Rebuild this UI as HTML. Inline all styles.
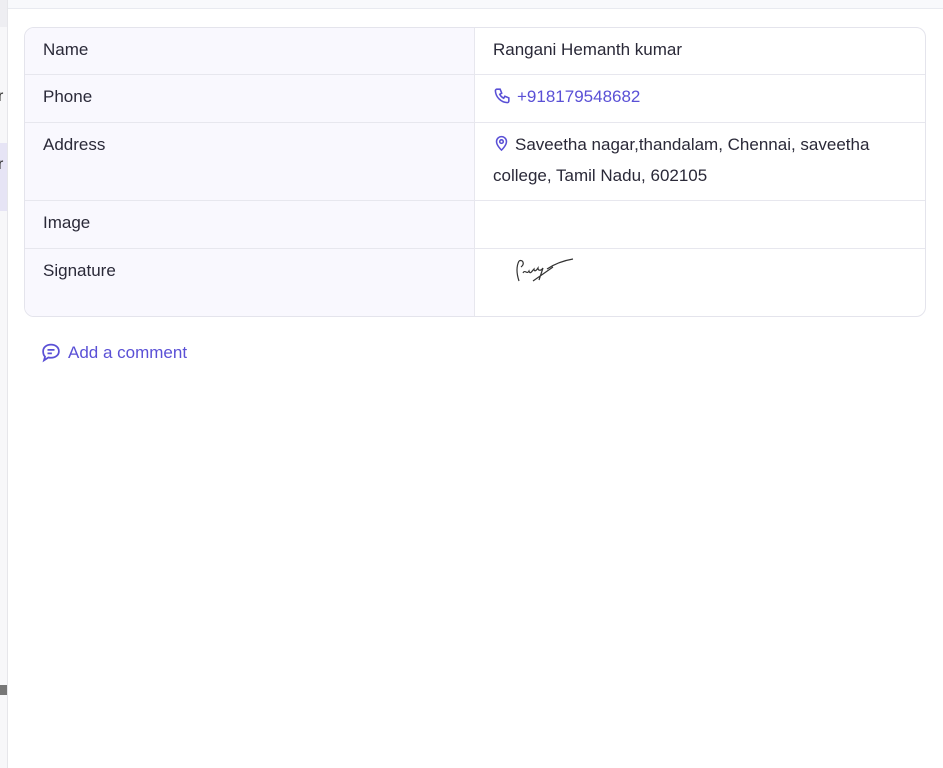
<!DOCTYPE html>
<html><head><meta charset="utf-8"><style>
body{margin:0;width:943px;height:768px;overflow:hidden;background:#fff;font-family:"Liberation Sans",sans-serif;position:relative}
.side{position:absolute;left:0;top:0;width:7px;height:768px;background:#f7f7f9;border-right:1px solid #e6e6ea;overflow:hidden}
.top{position:absolute;left:8px;top:0;right:0;height:8px;background:#f8f9fc;border-bottom:1px solid #e8eaf0}
.card{position:absolute;left:24px;top:27px;width:900px;height:288px;border:1px solid #e4e4ec;border-radius:10px;overflow:hidden}
.row{display:flex;border-bottom:1px solid #e7e7ee;box-sizing:border-box}
.row:last-child{border-bottom:none}
.k{width:450px;background:#f9f8fe;border-right:1px solid #e7e7ee;padding:12px 0 0 18px;box-sizing:border-box;font-size:17px;color:#2a2938}
.v{flex:1;padding:12px 0 0 18px;font-size:17px;color:#2a2938;line-height:31px;margin-top:-6px}
.lk{color:#5a50d6}
.c{position:absolute;left:40px;top:342px;color:#5a50d6;font-size:17px;display:flex;align-items:center;gap:6px}
</style></head><body>
<div class="side"><div style="position:absolute;top:0;height:27px;width:7px;background:#eeeef2"></div><div style="position:absolute;top:143px;height:68px;width:7px;background:#e6e4f5"></div><div style="position:absolute;top:88px;left:-2px;font-size:16px;color:#333">r</div><div style="position:absolute;top:156px;left:-2px;font-size:16px;color:#333">r</div><div style="position:absolute;top:685px;height:10px;width:7px;background:#777"></div></div>
<div class="top"></div>
<div class="card">
<div class="row" style="height:47px"><div class="k">Name</div><div class="v">Rangani Hemanth kumar</div></div>
<div class="row" style="height:48px"><div class="k">Phone</div><div class="v lk"><svg width="19" height="19" viewBox="0 0 24 24" fill="none" stroke="#5a50d6" stroke-width="2" style="vertical-align:-3px;margin-right:5px"><path d="M5 4h4l2 5-2.5 1.5a11 11 0 0 0 5 5L15 13l5 2v4a2 2 0 0 1-2 2A16 16 0 0 1 3 6a2 2 0 0 1 2-2"/></svg>+918179548682</div></div>
<div class="row" style="height:78px"><div class="k">Address</div><div class="v"><svg width="17" height="20" viewBox="0 0 24 24" fill="none" stroke="#5a50d6" stroke-width="2.2" style="vertical-align:-3px;margin-right:5px"><path d="M12 22s-7-6.5-7-12a7 7 0 0 1 14 0c0 5.5-7 12-7 12z"/><circle cx="12" cy="10" r="2.5"/></svg>Saveetha nagar,thandalam, Chennai, saveetha college, Tamil Nadu, 602105</div></div>
<div class="row" style="height:48px"><div class="k">Image</div><div class="v"></div></div>
<div class="row" style="height:67px"><div class="k">Signature</div><div class="v" style="position:relative"><svg width="64" height="30" viewBox="0 0 64 30" style="position:absolute;left:38px;top:12px" fill="none" stroke="#333" stroke-width="1.2"><path d="M6 6c-3 6-2 14 0 20M6 6c4-2 6 3 2 6M10 18c2-4 4 2 6-2 1 4 3 0 5-2 0 3 2 2 4-1 0 3 3 3 5 0l-4 12M34 14c6-4 14-8 26-10M20 26l20-14"/></svg></div></div>
</div>
<div class="c"><svg width="22" height="21" viewBox="0 0 24 24" fill="none" stroke="#5a50d6" stroke-width="2"><path d="M12 3c5 0 9 3 9 7.5S17 18 12 18c-1 0-2 0-3-.3L4 21l1.2-4.2C3.8 15.4 3 13.5 3 10.5 3 6 7 3 12 3z"/><path d="M8 9h8M8 13h5"/></svg>Add a comment</div>
</body></html>
